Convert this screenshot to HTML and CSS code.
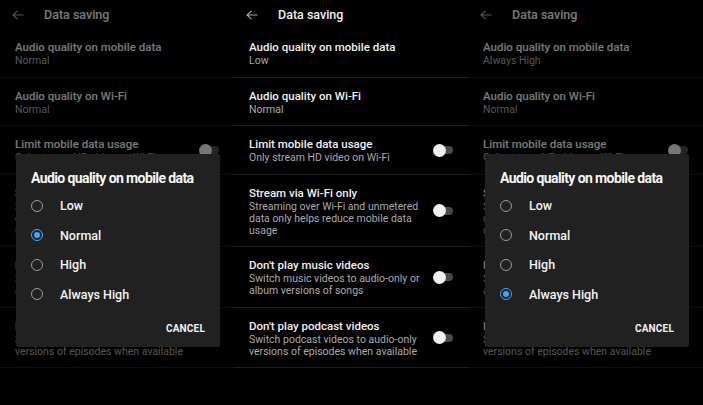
FILE: index.html
```html
<!DOCTYPE html>
<html lang="en">
<head>
<meta charset="utf-8">
<title>Data saving</title>
<link rel="stylesheet" href="styles.css">
</head>
<body>
<div class="screens">

  <section class="screen screen-a">
    <header class="bar">
      <svg class="back" viewBox="0 0 12 10" width="12" height="10"><path d="M11.5 5H1M5.5 0.8L1 5l4.5 4.2" fill="none" stroke="currentColor" stroke-width="1.1"/></svg>
      <h1 class="bar-title">Data saving</h1>
    </header>
    <ul class="list">
      <li class="row"><div class="txt"><div class="t">Audio quality on mobile data</div><div class="s">Normal</div></div></li>
      <li class="row"><div class="txt"><div class="t">Audio quality on Wi-Fi</div><div class="s">Normal</div></div></li>
      <li class="row"><div class="txt"><div class="t">Limit mobile data usage</div><div class="s">Only stream HD video on Wi-Fi</div></div><span class="toggle"></span></li>
      <li class="row"><div class="txt"><div class="t">Stream via Wi-Fi only</div><div class="s">Streaming over Wi-Fi and unmetered data only helps reduce mobile data usage</div></div><span class="toggle"></span></li>
      <li class="row"><div class="txt"><div class="t">Don't play music videos</div><div class="s">Switch music videos to audio-only or album versions of songs</div></div><span class="toggle"></span></li>
      <li class="row"><div class="txt"><div class="t">Don't play podcast videos</div><div class="s">Switch podcast videos to audio-only versions of episodes when available</div></div><span class="toggle"></span></li>
    </ul>
    <div class="scrim"></div>
    <div class="dialog">
      <h2 class="d-title">Audio quality on mobile data</h2>
      <ul class="opts">
        <li class="opt"><span class="radio"></span>Low</li>
        <li class="opt"><span class="radio on"></span>Normal</li>
        <li class="opt"><span class="radio"></span>High</li>
        <li class="opt"><span class="radio"></span>Always High</li>
      </ul>
      <div class="actions"><span class="btn">CANCEL</span></div>
    </div>
  </section>

  <section class="screen screen-b">
    <header class="bar">
      <svg class="back" viewBox="0 0 12 10" width="12" height="10"><path d="M11.5 5H1M5.5 0.8L1 5l4.5 4.2" fill="none" stroke="currentColor" stroke-width="1.1"/></svg>
      <h1 class="bar-title">Data saving</h1>
    </header>
    <ul class="list">
      <li class="row"><div class="txt"><div class="t">Audio quality on mobile data</div><div class="s">Low</div></div></li>
      <li class="row"><div class="txt"><div class="t">Audio quality on Wi-Fi</div><div class="s">Normal</div></div></li>
      <li class="row"><div class="txt"><div class="t">Limit mobile data usage</div><div class="s">Only stream HD video on Wi-Fi</div></div><span class="toggle"></span></li>
      <li class="row"><div class="txt"><div class="t">Stream via Wi-Fi only</div><div class="s">Streaming over Wi-Fi and unmetered data only helps reduce mobile data usage</div></div><span class="toggle"></span></li>
      <li class="row"><div class="txt"><div class="t">Don't play music videos</div><div class="s">Switch music videos to audio-only or album versions of songs</div></div><span class="toggle"></span></li>
      <li class="row"><div class="txt"><div class="t">Don't play podcast videos</div><div class="s">Switch podcast videos to audio-only versions of episodes when available</div></div><span class="toggle"></span></li>
    </ul>
  </section>

  <section class="screen screen-c">
    <header class="bar">
      <svg class="back" viewBox="0 0 12 10" width="12" height="10"><path d="M11.5 5H1M5.5 0.8L1 5l4.5 4.2" fill="none" stroke="currentColor" stroke-width="1.1"/></svg>
      <h1 class="bar-title">Data saving</h1>
    </header>
    <ul class="list">
      <li class="row"><div class="txt"><div class="t">Audio quality on mobile data</div><div class="s">Always High</div></div></li>
      <li class="row"><div class="txt"><div class="t">Audio quality on Wi-Fi</div><div class="s">Normal</div></div></li>
      <li class="row"><div class="txt"><div class="t">Limit mobile data usage</div><div class="s">Only stream HD video on Wi-Fi</div></div><span class="toggle"></span></li>
      <li class="row"><div class="txt"><div class="t">Stream via Wi-Fi only</div><div class="s">Streaming over Wi-Fi and unmetered data only helps reduce mobile data usage</div></div><span class="toggle"></span></li>
      <li class="row"><div class="txt"><div class="t">Don't play music videos</div><div class="s">Switch music videos to audio-only or album versions of songs</div></div><span class="toggle"></span></li>
      <li class="row"><div class="txt"><div class="t">Don't play podcast videos</div><div class="s">Switch podcast videos to audio-only versions of episodes when available</div></div><span class="toggle"></span></li>
    </ul>
    <div class="scrim"></div>
    <div class="dialog">
      <h2 class="d-title">Audio quality on mobile data</h2>
      <ul class="opts">
        <li class="opt"><span class="radio"></span>Low</li>
        <li class="opt"><span class="radio"></span>Normal</li>
        <li class="opt"><span class="radio"></span>High</li>
        <li class="opt"><span class="radio on"></span>Always High</li>
      </ul>
      <div class="actions"><span class="btn">CANCEL</span></div>
    </div>
  </section>

</div>
</body>
</html>
```
FILE: styles.css
```css
* { box-sizing: border-box; }
html, body {
  margin: 0;
  padding: 0;
  background: #000;
}
body {
  width: 703px;
  height: 405px;
  overflow: hidden;
  font-family: Roboto, "Liberation Sans", sans-serif;
  color: #f1f1f1;
}
.screens {
  display: flex;
  height: 405px;
}
.screen {
  position: relative;
  width: 234px;
  flex: none;
  height: 100%;
  background: #000;
  overflow: hidden;
}
.screen-c { width: 235px; }

.bar {
  display: flex;
  align-items: center;
  height: 29px;
  padding-left: 12px;
}
.back {
  color: #aaaaaa;
  flex: none;
  margin-right: 20px;
}
.bar-title {
  margin: 0;
  font-size: 12.5px;
  font-weight: 500;
  color: #f1f1f1;
}

.list {
  list-style: none;
  margin: 0;
  padding: 0;
}
.row {
  display: flex;
  align-items: center;
  padding: 10px 15px 9.5px 15px;
  border-bottom: 1px solid #1e1e1e;
}
.txt {
  flex: 1;
  min-width: 0;
}
.t {
  font-size: 11.5px;
  font-weight: 500;
  line-height: 16px;
  color: #f1f1f1;
}
.s {
  font-size: 10.5px;
  line-height: 12px;
  color: #aaaaaa;
}
.toggle {
  position: relative;
  flex: none;
  width: 20px;
  height: 13px;
  margin-left: 8px;
}
.toggle::before {
  content: "";
  position: absolute;
  left: 4px;
  right: 0;
  top: 2.5px;
  height: 8px;
  border-radius: 4px;
  background: #4a4a4a;
}
.toggle::after {
  content: "";
  position: absolute;
  left: 0;
  top: 0;
  width: 13px;
  height: 13px;
  border-radius: 50%;
  background: #efefef;
}

.scrim {
  position: absolute;
  inset: 0;
  background: rgba(0, 0, 0, 0.5);
}
.dialog {
  position: absolute;
  top: 154px;
  left: 16px;
  width: 204px;
  background: #212121;
  border-radius: 2px;
  padding: 16px 15px 7px 15px;
}
.screen-c .dialog { left: 17px; }
.d-title {
  margin: 0 0 5px 0;
  font-size: 14px;
  line-height: 16px;
  font-weight: 700;
  letter-spacing: -0.6px;
  color: #f6f6f6;
}
.opts {
  list-style: none;
  margin: 0;
  padding: 0;
}
.opt {
  display: flex;
  align-items: center;
  height: 29.5px;
  font-size: 12.5px;
  font-weight: 500;
  color: #f4f4f4;
}
.radio {
  flex: none;
  width: 12px;
  height: 12px;
  border-radius: 50%;
  border: 1.5px solid #9a9a9a;
  margin-right: 17px;
  display: flex;
  align-items: center;
  justify-content: center;
}
.radio.on {
  border-color: #3ea6ff;
}
.radio.on::after {
  content: "";
  width: 6px;
  height: 6px;
  border-radius: 50%;
  background: #3ea6ff;
}
.actions {
  display: flex;
  justify-content: flex-end;
  align-items: center;
  height: 24px;
  margin-top: 7px;
}
.btn {
  font-size: 10px;
  font-weight: 700;
  letter-spacing: 0.2px;
  color: #f1f1f1;
}
```
